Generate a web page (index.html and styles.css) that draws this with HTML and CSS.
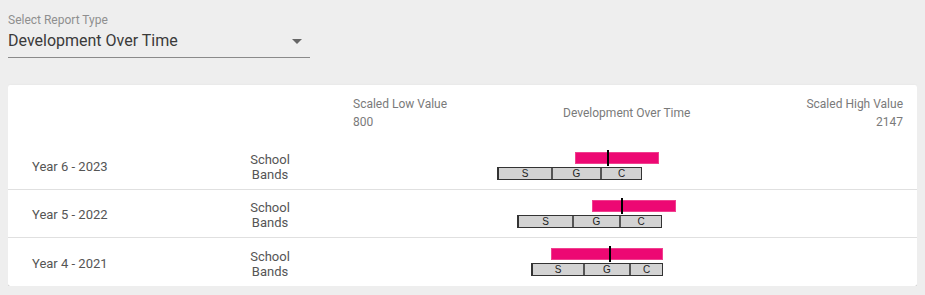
FILE: index.html
```html
<!DOCTYPE html>
<html lang="en">
<head>
    <meta charset="UTF-8">
    <title>Development Over Time</title>
    <link rel="stylesheet" href="styles.css">
</head>
<body>

    <!-- Report type selector -->
    <div class="select-field">
        <label class="select-label">Select Report Type</label>
        <div class="select-value">
            <span>Development Over Time</span>
            <span class="select-arrow"></span>
        </div>
    </div>

    <div class="card">
        <div class="row header-row">
            <div class="cell"></div>
            <div class="cell"></div>
            <div class="cell chart-head">
                <div class="scale-low">
                    <div>Scaled Low Value</div>
                    <div>800</div>
                </div>
                <div class="chart-title">Development Over Time</div>
                <div class="scale-high">
                    <div>Scaled High Value</div>
                    <div>2147</div>
                </div>
            </div>
        </div>

        <div class="row">
            <div class="cell year">Year 6 - 2023</div>
            <div class="cell bands-label">School<br>Bands</div>
            <div class="cell chart">
                <div class="range" style="left: 222px; width: 84px;"></div>
                <div class="marker" style="left: 254px;"></div>
                <div class="bands" style="left: 144px;">
                    <div class="band" style="width: 52px;">S</div>
                    <div class="band" style="width: 49px;">G</div>
                    <div class="band" style="width: 41px;">C</div>
                </div>
            </div>
        </div>

        <div class="row">
            <div class="cell year">Year 5 - 2022</div>
            <div class="cell bands-label">School<br>Bands</div>
            <div class="cell chart">
                <div class="range" style="left: 239px; width: 84px;"></div>
                <div class="marker" style="left: 268px;"></div>
                <div class="bands" style="left: 164px;">
                    <div class="band" style="width: 53px;">S</div>
                    <div class="band" style="width: 47px;">G</div>
                    <div class="band" style="width: 42px;">C</div>
                </div>
            </div>
        </div>

        <div class="row">
            <div class="cell year">Year 4 - 2021</div>
            <div class="cell bands-label">School<br>Bands</div>
            <div class="cell chart">
                <div class="range" style="left: 198px; width: 112px;"></div>
                <div class="marker" style="left: 256px;"></div>
                <div class="bands" style="left: 178px;">
                    <div class="band" style="width: 50px;">S</div>
                    <div class="band" style="width: 46px;">G</div>
                    <div class="band" style="width: 33px;">C</div>
                </div>
            </div>
        </div>
    </div>

</body>
</html>
```

FILE: styles.css
```css
/* Global Styles */
body {
    font-family: Roboto, 'Liberation Sans', sans-serif;
    background: #eeeeee;
    color: #555;
    margin: 8px;
}

/* Select field */
.select-field {
    width: 302px;
    padding-top: 4px;
    border-bottom: 1px solid #8a8a8a;
    margin-bottom: 27px;
}

.select-label {
    display: block;
    font-size: 12px;
    line-height: 16px;
    color: #8f8f8f;
}

.select-value {
    display: flex;
    justify-content: space-between;
    align-items: center;
    font-size: 16px;
    line-height: 20px;
    color: #3a3a3a;
    padding: 3px 0 6px;
}

.select-arrow {
    width: 0;
    height: 0;
    border-left: 5px solid transparent;
    border-right: 5px solid transparent;
    border-top: 5px solid #666;
    margin-right: 8px;
}

/* Card */
.card {
    background: white;
    border-radius: 2px;
    box-shadow: 0 2px 1px -1px rgba(0, 0, 0, 0.2), 0 1px 1px 0 rgba(0, 0, 0, 0.14), 0 1px 3px 0 rgba(0, 0, 0, 0.12);
}

.row {
    display: grid;
    grid-template-columns: 207px 110px 1fr;
    height: 48px;
    padding-right: 14px;
    box-sizing: border-box;
    border-bottom: 1px solid #e0e0e0;
    font-size: 13px;
}

.row:last-child {
    border-bottom: none;
}

.header-row {
    height: 57px;
    border-bottom: none;
}

.cell {
    display: flex;
    align-items: center;
}

.year {
    padding: 2px 0 0 24px;
}

.bands-label {
    justify-content: center;
    text-align: center;
    line-height: 15px;
    padding-top: 3px;
}

/* Header of the chart column */
.chart-head {
    margin-left: 28px;
    align-items: stretch;
    justify-content: space-between;
    font-size: 12px;
    line-height: 18px;
    color: #7a7a7a;
    padding-top: 10px;
}

.chart-title {
    align-self: flex-start;
    padding-top: 9px;
}

.scale-high {
    text-align: right;
}

/* Chart bars */
.chart {
    position: relative;
    margin-left: 28px;
}

.range {
    position: absolute;
    top: 10px;
    height: 12px;
    background: #ed0873;
    box-shadow: inset 0 0 0 1px #f0408f;
}

.marker {
    position: absolute;
    top: 8px;
    width: 2px;
    height: 16px;
    background: black;
}

.bands {
    position: absolute;
    top: 25px;
    display: flex;
    border: 1px solid #333;
    border-left-width: 2px;
}

.band {
    height: 11px;
    background: #d3d3d3;
    border-left: 2px solid #555;
    font-family: 'Liberation Sans', Arial, sans-serif;
    font-size: 10px;
    line-height: 11px;
    text-align: center;
    color: #222;
    box-sizing: border-box;
}

.band:first-child {
    border-left: none;
}
```
